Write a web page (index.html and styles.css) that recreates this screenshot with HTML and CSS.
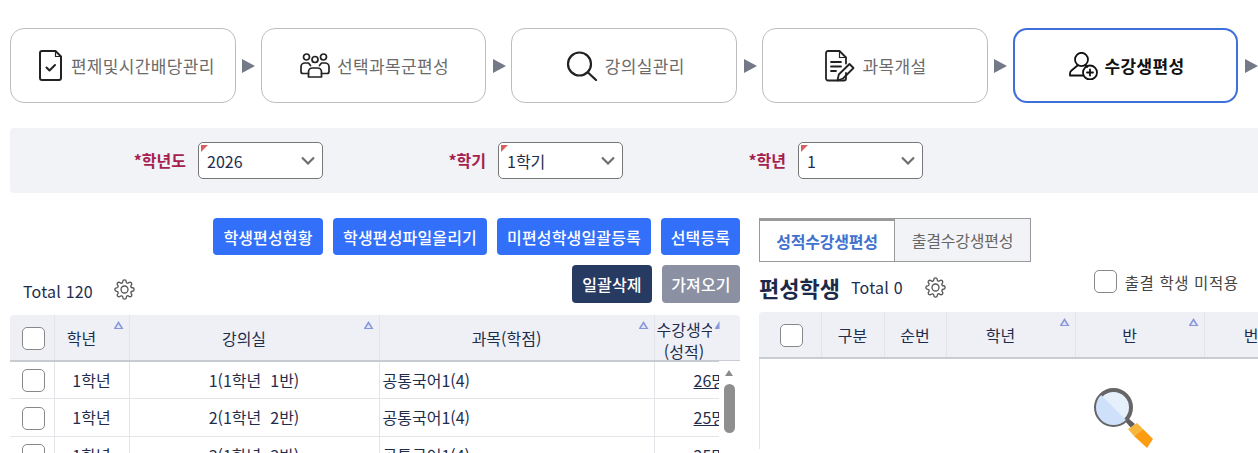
FILE: index.html
```html
<!DOCTYPE html>
<html lang="ko">
<head>
    <meta charset="UTF-8">
    <title>수강생편성</title>
    <link rel="stylesheet" href="styles.css">
</head>
<body>
    <nav class="steps">
        <a class="step step-first">
            <svg class="step-icon" width="23" height="31" viewBox="0 0 23 31" fill="none" stroke="#222" stroke-width="2" stroke-linejoin="round" stroke-linecap="round">
                <path d="M3 1h13.500L22 6.500V28a2 2 0 0 1-2 2H3a2 2 0 0 1-2-2V3a2 2 0 0 1 2-2z"/>
                <path d="M16.500 1v5.500H22" stroke-width="1.200"/>
                <path d="M7.500 17.500l3 3 5.500-5.500"/>
            </svg>
            <span>편제및시간배당관리</span>
        </a>
        <i class="arrow"></i>
        <a class="step">
            <svg class="step-icon" width="30" height="25" viewBox="0 0 30 25" fill="none" stroke="#222" stroke-width="1.700" stroke-linejoin="round" stroke-linecap="round">
                <circle cx="6.500" cy="4" r="3"/>
                <circle cx="15" cy="6.500" r="3"/>
                <circle cx="23.500" cy="4" r="3"/>
                <path d="M8.500 24v-5a4 4 0 0 1 4-4h5a4 4 0 0 1 4 4v5z"/>
                <path d="M8.500 20.500H3a2 2 0 0 1-2-2V14a4 4 0 0 1 4-4h3.500l2 2.500"/>
                <path d="M21.500 20.500H27a2 2 0 0 0 2-2V14a4 4 0 0 0-4-4h-3.500l-2 2.500"/>
            </svg>
            <span>선택과목군편성</span>
        </a>
        <i class="arrow"></i>
        <a class="step">
            <svg class="step-icon" width="32" height="30" viewBox="0 0 32 30" fill="none" stroke="#222" stroke-width="2.200" stroke-linecap="round">
                <circle cx="13.500" cy="13" r="11.500"/>
                <path d="M22 21.500l8 7.500"/>
            </svg>
            <span>강의실관리</span>
        </a>
        <i class="arrow"></i>
        <a class="step">
            <svg class="step-icon" width="30" height="32" viewBox="0 0 30 32" fill="none" stroke="#222" stroke-width="1.800" stroke-linejoin="round" stroke-linecap="round">
                <path d="M21 23v5.500a2 2 0 0 1-2 2H3a2 2 0 0 1-2-2V3a2 2 0 0 1 2-2h11.500L21 7.500v6"/>
                <path d="M14.500 1v6.500H21" stroke-width="1.200"/>
                <path d="M6 12h10M6 16.500h10M6 21h5"/>
                <path d="M12.500 30.500l1.300-6L24.500 14l4 4-10.500 10.500z"/>
            </svg>
            <span>과목개설</span>
        </a>
        <i class="arrow"></i>
        <a class="step step-active">
            <svg class="step-icon" width="29" height="28" viewBox="0 0 29 28" fill="none" stroke="#111" stroke-width="1.800" stroke-linecap="round" stroke-linejoin="round">
                <ellipse cx="12.500" cy="7.500" rx="6.500" ry="6.700"/>
                <path d="M8.500 13.500L2.500 18.500Q1 19.800 1 21.500V23.500H14"/>
                <path d="M16.500 13.500L18 15"/>
                <circle cx="21" cy="20.500" r="7"/>
                <path d="M21 17.500v6M18 20.500h6"/>
            </svg>
            <span>수강생편성</span>
        </a>
        <i class="arrow"></i>
    </nav>

    <section class="filters">
        <div class="filter">
            <label class="filter-label">*학년도</label>
            <div class="select"><span>2026</span><svg width="14" height="9" viewBox="0 0 14 9" fill="none" stroke="#6f6f6f" stroke-width="2.200"><path d="M1 1.500l6 6 6-6"/></svg></div>
        </div>
        <div class="filter">
            <label class="filter-label">*학기</label>
            <div class="select"><span>1학기</span><svg width="14" height="9" viewBox="0 0 14 9" fill="none" stroke="#6f6f6f" stroke-width="2.200"><path d="M1 1.500l6 6 6-6"/></svg></div>
        </div>
        <div class="filter">
            <label class="filter-label">*학년</label>
            <div class="select"><span>1</span><svg width="14" height="9" viewBox="0 0 14 9" fill="none" stroke="#6f6f6f" stroke-width="2.200"><path d="M1 1.500l6 6 6-6"/></svg></div>
        </div>
    </section>

    <main class="panels">
        <section class="panel-left">
            <div class="btn-row">
                <button class="btn btn-blue btn-w110">학생편성현황</button>
                <button class="btn btn-blue btn-w154">학생편성파일올리기</button>
                <button class="btn btn-blue btn-w154">미편성학생일괄등록</button>
                <button class="btn btn-blue btn-w79">선택등록</button>
            </div>
            <div class="toolbar">
                <div class="total">
                    <span>Total 120</span>
                    <svg class="gear" width="21" height="21" viewBox="0 0 24 24" fill="none" stroke="#555" stroke-width="1.500"><circle cx="12" cy="12" r="4"/><path d="M19.400 15a1.650 1.650 0 0 0 .33 1.820l.06.06a2 2 0 0 1 0 2.830 2 2 0 0 1-2.830 0l-.06-.06a1.650 1.650 0 0 0-1.820-.33 1.650 1.650 0 0 0-1 1.510V21a2 2 0 0 1-2 2 2 2 0 0 1-2-2v-.09A1.650 1.650 0 0 0 9 19.400a1.650 1.650 0 0 0-1.820.33l-.06.06a2 2 0 0 1-2.830 0 2 2 0 0 1 0-2.830l.06-.06a1.650 1.650 0 0 0 .33-1.820 1.650 1.650 0 0 0-1.510-1H3a2 2 0 0 1-2-2 2 2 0 0 1 2-2h.09A1.650 1.650 0 0 0 4.600 9a1.650 1.650 0 0 0-.33-1.820l-.06-.06a2 2 0 0 1 0-2.830 2 2 0 0 1 2.830 0l.06.06a1.650 1.650 0 0 0 1.820.33H9a1.650 1.650 0 0 0 1-1.510V3a2 2 0 0 1 2-2 2 2 0 0 1 2 2v.09a1.650 1.650 0 0 0 1 1.510 1.650 1.650 0 0 0 1.820-.33l.06-.06a2 2 0 0 1 2.830 0 2 2 0 0 1 0 2.830l-.06.06a1.650 1.650 0 0 0-.33 1.820V9a1.650 1.650 0 0 0 1.510 1H21a2 2 0 0 1 2 2 2 2 0 0 1-2 2h-.09a1.650 1.650 0 0 0-1.510 1z"/></svg>
                </div>
                <div class="btn-row-second">
                    <button class="btn btn-navy btn-w80">일괄삭제</button>
                    <button class="btn btn-grey btn-w78">가져오기</button>
                </div>
            </div>

            <div class="grid grid-left">
                <table class="grid-table">
                    <colgroup>
                        <col class="c-44"><col class="c-75"><col class="c-250"><col class="c-275"><col class="c-86">
                    </colgroup>
                    <thead>
                        <tr>
                            <th><i class="check"></i></th>
                            <th class="sort">학년</th>
                            <th class="sort">강의실</th>
                            <th class="sort">과목(학점)</th>
                            <th class="sort th-narrow"><div class="th-clip">수강생수<br>(성적)</div></th>
                        </tr>
                    </thead>
                    <tbody>
                        <tr><td><i class="check"></i></td><td>1학년</td><td>1(1학년&nbsp; 1반)</td><td class="left">공통국어1(4)</td><td class="count"><a>26명</a></td></tr>
                        <tr><td><i class="check"></i></td><td>1학년</td><td>2(1학년&nbsp; 2반)</td><td class="left">공통국어1(4)</td><td class="count"><a>25명</a></td></tr>
                        <tr><td><i class="check"></i></td><td>1학년</td><td>3(1학년&nbsp; 3반)</td><td class="left">공통국어1(4)</td><td class="count"><a>25명</a></td></tr>
                    </tbody>
                </table>
                <div class="scrollbar">
                    <i class="scroll-up"></i>
                    <i class="scroll-thumb"></i>
                </div>
            </div>
        </section>

        <section class="panel-right">
            <div class="tabs">
                <a class="tab tab-active">성적수강생편성</a>
                <a class="tab">출결수강생편성</a>
            </div>
            <div class="right-head">
                <h2 class="right-title">편성학생</h2>
                <span class="right-total">Total 0</span>
                <svg class="gear" width="21" height="21" viewBox="0 0 24 24" fill="none" stroke="#555" stroke-width="1.500"><circle cx="12" cy="12" r="4"/><path d="M19.400 15a1.650 1.650 0 0 0 .33 1.820l.06.06a2 2 0 0 1 0 2.830 2 2 0 0 1-2.830 0l-.06-.06a1.650 1.650 0 0 0-1.820-.33 1.650 1.650 0 0 0-1 1.510V21a2 2 0 0 1-2 2 2 2 0 0 1-2-2v-.09A1.650 1.650 0 0 0 9 19.400a1.650 1.650 0 0 0-1.820.33l-.06.06a2 2 0 0 1-2.830 0 2 2 0 0 1 0-2.830l.06-.06a1.650 1.650 0 0 0 .33-1.820 1.650 1.650 0 0 0-1.510-1H3a2 2 0 0 1-2-2 2 2 0 0 1 2-2h.09A1.650 1.650 0 0 0 4.600 9a1.650 1.650 0 0 0-.33-1.820l-.06-.06a2 2 0 0 1 0-2.830 2 2 0 0 1 2.830 0l.06.06a1.650 1.650 0 0 0 1.820.33H9a1.650 1.650 0 0 0 1-1.510V3a2 2 0 0 1 2-2 2 2 0 0 1 2 2v.09a1.650 1.650 0 0 0 1 1.510 1.650 1.650 0 0 0 1.820-.33l.06-.06a2 2 0 0 1 2.830 0 2 2 0 0 1 0 2.830l-.06.06a1.650 1.650 0 0 0-.33 1.820V9a1.650 1.650 0 0 0 1.510 1H21a2 2 0 0 1 2 2 2 2 0 0 1-2 2h-.09a1.650 1.650 0 0 0-1.510 1z"/></svg>
                <label class="exclude"><i class="check"></i>출결 학생 미적용</label>
            </div>
            <div class="grid grid-right">
                <table class="grid-table">
                    <colgroup>
                        <col class="c-62"><col class="c-63"><col class="c-62"><col class="c-129"><col class="c-129"><col class="c-129">
                    </colgroup>
                    <thead>
                        <tr>
                            <th><i class="check"></i></th>
                            <th>구분</th>
                            <th>순번</th>
                            <th class="sort">학년</th>
                            <th class="sort">반</th>
                            <th class="sort">번호</th>
                        </tr>
                    </thead>
                </table>
                <div class="empty">
                    <svg width="61" height="61" viewBox="0 0 61 61">
                        <path d="M31 33l3-3 7 6-4 4z" fill="#5e5e5e"/>
                        <path d="M34 41l9-6 6 6-9 7z" fill="#f6b73c"/>
                        <path d="M40 48l9-7 10 10-6 9z" fill="#fb9c13"/>
                        <circle cx="19.500" cy="19.500" r="17.500" fill="#e6f0fd" stroke="#666" stroke-width="4"/>
                        <path d="M7.100 7.100A17.500 17.500 0 0 0 31.900 31.900z" fill="#cfe1fa"/>
                    </svg>
                </div>
            </div>
        </section>
    </main>
</body>
</html>
```

FILE: styles.css
```css
* {
    box-sizing: border-box;
}
html, body {
    height: 453px;
    overflow: hidden;
}
body {
    margin: 0;
    padding: 28px 0 0 10px;
    background: #fff;
    color: #1f2d4d;
    font-family: "Noto Sans CJK KR", "Noto Sans", sans-serif;
    font-size: 16px;
}
i {
    font-style: normal;
}

/* 단계 */
.steps {
    display: flex;
    align-items: center;
    width: 1300px;
}
.step {
    display: flex;
    align-items: center;
    justify-content: center;
    flex: none;
    gap: 7px;
    width: 225.700px;
    height: 75px;
    padding-left: 2px;
    border: 1px solid #bdbdbd;
    border-radius: 14px;
    color: #6b6b6b;
    font-size: 17px;
    letter-spacing: 0.350px;
}
.step-first {
    gap: 9px;
    padding-left: 8px;
}
.step-active {
    border: 2px solid #3f6fd8;
    color: #111;
    font-weight: 700;
}
.arrow {
    display: flex;
    justify-content: center;
    flex: none;
    width: 25px;
}
.arrow::before {
    content: "";
    margin-left: 1px;
    border-left: 13px solid #747987;
    border-top: 7.500px solid transparent;
    border-bottom: 7.500px solid transparent;
}

/* 조회 조건 */
.filters {
    display: flex;
    height: 65px;
    margin-top: 25px;
    padding-top: 14px;
    background: #f2f3f7;
    border-radius: 4px 0 0 4px;
}
.filter {
    display: flex;
    align-items: flex-start;
    flex: none;
    width: 300px;
}
.filter-label {
    flex: none;
    width: 176px;
    padding-top: 6px;
    text-align: right;
    color: #a5214f;
    font-weight: 700;
    font-size: 16px;
}
.select {
    position: relative;
    display: flex;
    align-items: center;
    justify-content: space-between;
    flex: none;
    width: 125px;
    height: 37px;
    margin-left: 12px;
    padding: 0 7px 0 8px;
    background: #fff;
    border: 1px solid #777;
    border-radius: 5px;
}
.select::before {
    content: "";
    position: absolute;
    left: 2px;
    top: 2px;
    border-top: 7px solid #d9605c;
    border-right: 7px solid transparent;
}

/* 패널 */
.panels {
    display: flex;
    gap: 19px;
    margin-top: 25px;
}
.panel-left {
    width: 730px;
    flex: none;
}
.panel-right {
    width: 620px;
    flex: none;
}
.btn-row {
    display: flex;
    justify-content: flex-end;
    gap: 10px;
}
.btn {
    height: 37px;
    padding: 0;
    border: none;
    border-radius: 4px;
    color: #fff;
    font-family: inherit;
    font-size: 16px;
    font-weight: 500;
    letter-spacing: 0.150px;
}
.btn-blue {
    background: #3370fa;
}
.btn-navy {
    height: 38px;
    background: #273a62;
}
.btn-grey {
    height: 38px;
    background: #8b91a3;
}
.btn-w110 { width: 110px; }
.btn-w154 { width: 154px; }
.btn-w79 { width: 79px; }
.btn-w80 { width: 80px; }
.btn-w78 { width: 78px; }
.toolbar {
    display: flex;
    justify-content: space-between;
    height: 50px;
    margin-top: 10px;
}
.btn-row-second {
    display: flex;
    gap: 10px;
}
.total {
    display: flex;
    align-items: flex-start;
    gap: 21px;
    padding: 14px 0 0 13px;
    line-height: 24px;
    letter-spacing: 0.200px;
}

/* 그리드 */
.grid {
    position: relative;
    overflow: hidden;
    border-radius: 4px 4px 0 0;
}
.grid-table {
    table-layout: fixed;
    border-collapse: collapse;
    width: 730px;
}
.c-44 { width: 44px; }
.c-75 { width: 75px; }
.c-250 { width: 250px; }
.c-275 { width: 275px; }
.c-86 { width: 86px; }
.c-62 { width: 62px; }
.c-63 { width: 63px; }
.c-129 { width: 129px; }
.grid-table th {
    position: relative;
    height: 46px;
    padding: 0;
    background: #eef0f6;
    border-right: 1px solid #e2e4ea;
    border-bottom: 2px solid #c9cbd2;
    font-weight: 400;
    text-align: center;
}
.grid-table th.sort {
    padding-right: 20px;
}
.grid-table th.sort::after,
.grid-table th.sort::before {
    content: "";
    position: absolute;
    clip-path: polygon(50% 0, 100% 100%, 0 100%);
}
.grid-table th.sort::after {
    top: 6px;
    right: 5px;
    width: 10px;
    height: 8px;
    background: #8797d8;
}
.grid-table th.sort::before {
    z-index: 1;
    top: 9px;
    right: 7.500px;
    width: 5px;
    height: 4px;
    background: #e3e6f6;
}
.grid-table th.th-narrow {
    padding: 0 0 0 2px;
    border-right: none;
    line-height: 22px;
}
.grid-table th.th-narrow::after {
    right: auto;
    left: 60px;
    width: 5px;
    clip-path: polygon(100% 0, 100% 100%, 0 100%);
}
.grid-table th.th-narrow::before {
    display: none;
}
.th-clip {
    width: 55px;
    height: 44px;
    padding-top: 2px;
    overflow: hidden;
    white-space: nowrap;
}
.grid-table td {
    height: 37.500px;
    padding: 0;
    border-right: 1px solid #e4e5ea;
    border-bottom: 1px solid #e4e5ea;
    text-align: center;
}
.grid-table td.left {
    padding-left: 3px;
    text-align: left;
}
.grid-table td.count {
    padding-left: 39px;
    text-align: left;
    border-right: none;
}
.count a {
    text-decoration: underline;
    white-space: nowrap;
}
.check {
    display: inline-block;
    width: 23px;
    height: 23px;
    margin: -3px 0 0 3px;
    vertical-align: middle;
    background: #fff;
    border: 1.500px solid #888;
    border-radius: 5px;
}
.scrollbar {
    position: absolute;
    top: 46px;
    right: 0;
    bottom: 0;
    width: 21px;
    background: #fff;
}
.scroll-up {
    position: absolute;
    top: 9px;
    left: 6px;
    border-left: 4px solid transparent;
    border-right: 4px solid transparent;
    border-bottom: 6px solid #8a8a8a;
}
.scroll-thumb {
    position: absolute;
    top: 23px;
    left: 5px;
    width: 11px;
    height: 49px;
    background: #8f8f8f;
    border-radius: 6px;
}
.grid-left {
    height: 200px;
}

/* 오른쪽 */
.tabs {
    display: flex;
    height: 44px;
}
.tab {
    display: flex;
    align-items: center;
    justify-content: center;
    width: 136px;
    background: #f2f3f7;
    border: 1px solid #9a9a9a;
    border-left: none;
    color: #666;
    font-size: 16px;
    letter-spacing: -0.250px;
}
.tab-active {
    background: #fff;
    border-top: 3px solid #9a9a9a;
    border-left: 1px solid #9a9a9a;
    color: #3f72cf;
    font-weight: 700;
}
.right-head {
    display: flex;
    align-items: center;
    height: 50px;
}
.right-title {
    margin: 0;
    color: #1b2a4a;
    font-size: 22px;
    font-weight: 700;
}
.right-total {
    margin-left: 11px;
    letter-spacing: 0.200px;
}
.right-head .gear {
    margin-left: 22px;
}
.exclude {
    display: flex;
    align-items: center;
    gap: 8px;
    margin: -11px 0 0 148px;
    color: #444;
    font-size: 15.500px;
    letter-spacing: 0.600px;
}
.exclude .check {
    margin: 0;
}
.grid-right {
    height: 200px;
}
.grid-right .grid-table {
    width: 574px;
}
.empty {
    display: flex;
    padding: 29px 0 0 334px;
    border-left: 1px solid #e4e5ea;
}
```
